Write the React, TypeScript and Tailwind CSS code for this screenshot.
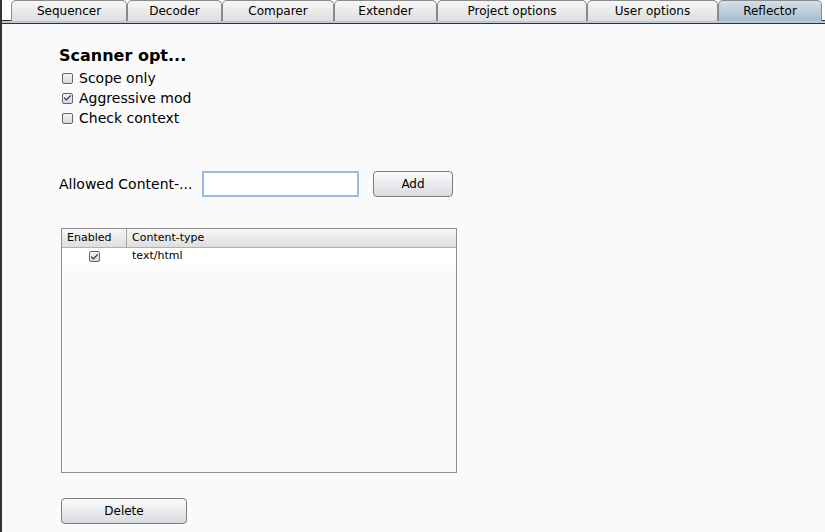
import { Check } from 'lucide-react';

const tabs = [
  { label: 'Sequencer', w: 'w-[116px]' },
  { label: 'Decoder', w: 'w-[95px]' },
  { label: 'Comparer', w: 'w-[112px]' },
  { label: 'Extender', w: 'w-[103px]' },
  { label: 'Project options', w: 'w-[150px]' },
  { label: 'User options', w: 'w-[131px]' },
  { label: 'Reflector', w: 'w-[104px]', active: true },
];

const Box = ({ checked }: { checked?: boolean }) => (
  <span className="flex h-[11px] w-[11px] items-center justify-center rounded-[2px] border border-[#5f6670] bg-gradient-to-b from-[#f4f6f8] to-[#d3d8de]">
    {checked && <Check size={10} strokeWidth={3} className="text-[#26334d]" />}
  </span>
);

const Button = ({ label, w }: { label: string; w: string }) => (
  <button
    className={`${w} h-[26px] rounded-[4px] border border-[#7c7c7c] bg-gradient-to-b from-[#fbfbfb] to-[#d9dbe0] text-[12px] text-black`}
  >
    {label}
  </button>
);

export default function App() {
  const font = { fontFamily: '"DejaVu Sans", sans-serif' };
  return (
    <div
      className="flex h-[532px] w-[825px] flex-col overflow-hidden border-l-2 border-[#333] bg-[#fafafa]"
      style={font}
    >
      <div className="flex h-[21px] border-b border-[#333] bg-white pl-[9px]">
        {tabs.map((t) => (
          <div
            key={t.label}
            className={`${t.w} flex h-[21px] items-center justify-center rounded-t-[5px] border border-b-0 border-[#8a8a8a] text-[12px] text-black ${
              t.active
                ? 'bg-gradient-to-b from-[#d4dfe9] to-[#a9bccd]'
                : 'bg-gradient-to-b from-[#f7f7f7] to-[#dedede]'
            }`}
          >
            {t.label}
          </div>
        ))}
      </div>
      <div className="h-[3px] border-b border-[#333] bg-[#b8c9d9]" />

      <div className="flex flex-col pl-[57px] pt-[21px]">
        <h1 className="text-[16px] font-bold leading-[22px] text-black">Scanner opt...</h1>
        <div className="mt-[1px] flex flex-col pl-[3px]">
          {[
            ['Scope only', false],
            ['Aggressive mod', true],
            ['Check context', false],
          ].map(([label, c]) => (
            <label key={label as string} className="flex h-[20px] items-center gap-[6px] text-[14px] text-black">
              <Box checked={c as boolean} />
              {label}
            </label>
          ))}
        </div>

        <div className="mt-[43px] flex items-center">
          <span className="w-[143px] text-[14px] text-black">Allowed Content-...</span>
          <div className="h-[26px] w-[157px] border-2 border-[#9bbbdb] bg-white" />
          <div className="ml-[14px]">
            <Button label="Add" w="w-[80px]" />
          </div>
        </div>

        <div className="ml-[2px] mt-[31px] flex h-[245px] w-[396px] flex-col border border-[#8f8f8f] bg-[#fafafa]">
          <div className="flex h-[19px] border-b border-[#b0b0b0] bg-gradient-to-b from-[#f6f6f6] to-[#dedede] text-[11px] text-black">
            <div className="flex w-[65px] items-center border-r border-[#a5a5a5] pl-[5px]">Enabled</div>
            <div className="flex items-center pl-[5px]">Content-type</div>
          </div>
          <div className="flex h-[17px] bg-white text-[11px] text-black">
            <div className="flex w-[65px] items-center justify-center">
              <Box checked />
            </div>
            <div className="flex items-center pl-[5px]">text/html</div>
          </div>
        </div>

        <div className="ml-[2px] mt-[25px]">
          <Button label="Delete" w="w-[126px]" />
        </div>
      </div>
    </div>
  );
}
